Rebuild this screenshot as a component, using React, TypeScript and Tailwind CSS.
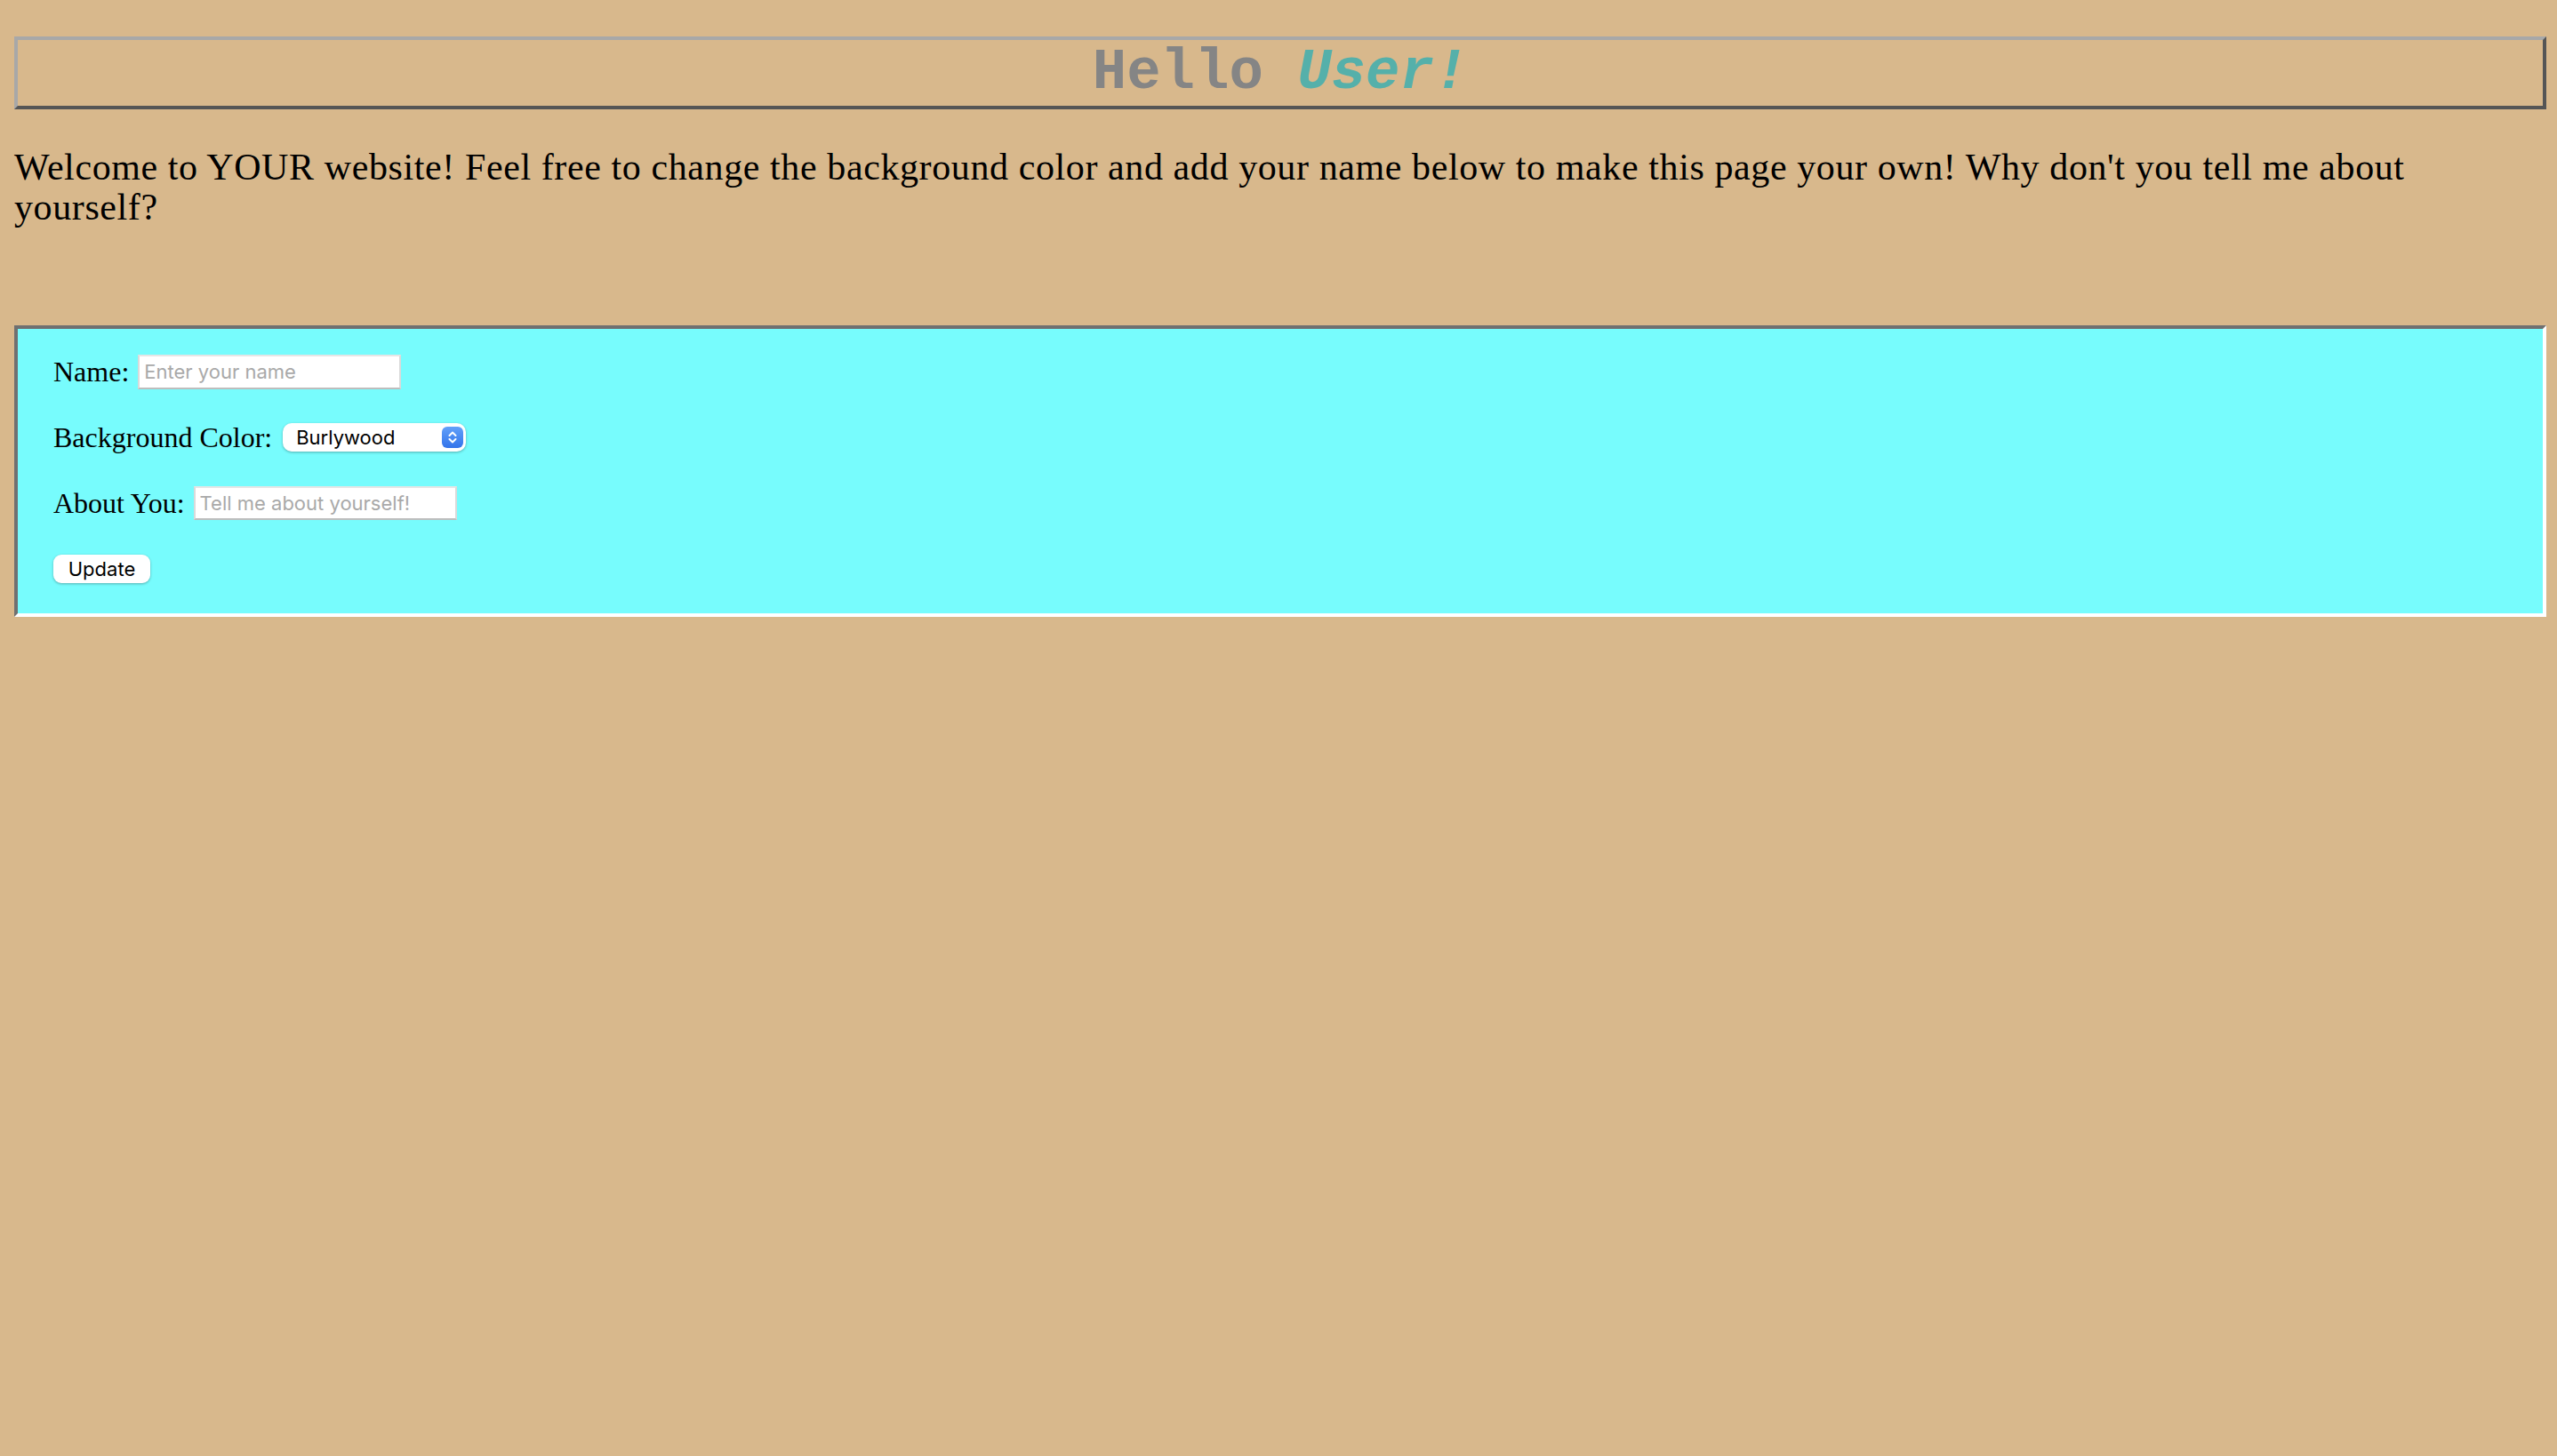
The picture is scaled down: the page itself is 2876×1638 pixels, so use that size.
import React, { useState } from 'react';

// swatches shown in the picker; burlywood is tuned to how it shows on screen
const BG_COLORS: Record<string, string> = {
  Burlywood: '#d8b88c',
  Lavender: '#e6e6fa',
  Khaki: '#f0e68c',
  Salmon: '#fa8072',
  'Light Gray': '#d3d3d3',
};

const Stepper: React.FC = () => (
  <div className="pointer-events-none absolute right-[3px] top-[4px] flex h-[24px] w-[24px] items-center justify-center rounded-[6px] bg-linear-to-b from-[#62a0f9] to-[#3373ea]">
    <svg width="12" height="18" viewBox="0 0 12 18" fill="none">
      <path d="M2.5 7L6 3.5L9.5 7" stroke="white" strokeWidth="2" strokeLinecap="round" strokeLinejoin="round" />
      <path d="M2.5 11L6 14.5L9.5 11" stroke="white" strokeWidth="2" strokeLinecap="round" strokeLinejoin="round" />
    </svg>
  </div>
);

export default function App() {
  const [name, setName] = useState('');
  const [about, setAbout] = useState('');
  const [color, setColor] = useState('Burlywood');
  const [applied, setApplied] = useState({ name: '', color: 'Burlywood' });

  const handleUpdate = () => {
    setApplied({ name: name.trim(), color });
  };

  return (
    <div
      className="min-h-screen w-full pl-4 pr-3 pt-[41px] font-['Liberation_Serif',serif] text-black"
      style={{ backgroundColor: BG_COLORS[applied.color] }}
    >
      {/* Greeting */}
      <h1 className="h-[82px] border-4 border-t-[#a8a8a8] border-l-[#a8a8a8] border-r-[#555555] border-b-[#555555] text-center font-['Liberation_Mono','Courier_New',monospace] text-[64px] font-bold leading-[74px]">
        <span className="text-[#858585]">Hello </span>
        <span className="italic text-[#55b0aa]">{applied.name || 'User'}!</span>
      </h1>

      <p className="mt-[43px] text-[42px] leading-[45px] tracking-[0.6px]">
        Welcome to YOUR website! Feel free to change the background color and add your name below to make this page your own! Why don't you tell me about
        <br />
        yourself?
      </p>

      {/* Settings form */}
      <form
        onSubmit={(e) => e.preventDefault()}
        className="mt-[110px] flex flex-col gap-[34px] border-4 border-t-[#707070] border-l-[#707070] border-r-white border-b-white bg-[#77fcfd] pb-[30px] pl-10 pt-[28px] font-['Inter','Liberation_Sans',sans-serif] text-[22px]"
      >
        <div className="flex h-10 items-center gap-[10px]">
          <label htmlFor="name" className="font-['Liberation_Serif',serif] text-[32px] leading-[37px]">
            Name:
          </label>
          <input
            id="name"
            value={name}
            onChange={(e) => setName(e.target.value)}
            placeholder="Enter your name"
            className="h-[39px] w-[296px] border-2 border-t-[#e6e6e6] border-l-[#dadada] border-r-[#dadada] border-b-[#bdbdbd] bg-white px-[5px] text-black outline-none placeholder:text-[#a9a9a9]"
          />
        </div>

        <div className="flex h-10 items-center gap-[10px]">
          <label htmlFor="bg" className="font-['Liberation_Serif',serif] text-[32px] leading-[37px]">
            Background Color:
          </label>
          <div className="relative ml-[2px] h-[32px] w-[206px] rounded-[10px] bg-white shadow-[0_1px_3px_rgba(0,0,0,0.3)]">
            <select
              id="bg"
              value={color}
              onChange={(e) => setColor(e.target.value)}
              className="h-full w-full appearance-none rounded-[10px] bg-transparent pl-[15px] text-black outline-none"
            >
              {Object.keys(BG_COLORS).map((c) => (
                <option key={c} value={c}>
                  {c}
                </option>
              ))}
            </select>
            <Stepper />
          </div>
        </div>

        <div className="flex h-10 items-center gap-[10px]">
          <label htmlFor="about" className="font-['Liberation_Serif',serif] text-[32px] leading-[37px]">
            About You:
          </label>
          <input
            id="about"
            value={about}
            onChange={(e) => setAbout(e.target.value)}
            placeholder="Tell me about yourself!"
            className="h-[38px] w-[296px] border-2 border-t-[#e6e6e6] border-l-[#dadada] border-r-[#dadada] border-b-[#bdbdbd] bg-white px-[5px] text-black outline-none placeholder:text-[#a9a9a9]"
          />
        </div>

        <div className="flex h-10 items-center">
          <button
            type="button"
            onClick={handleUpdate}
            className="h-[32px] w-[109px] rounded-[9px] bg-white text-black shadow-[0_1px_3px_rgba(0,0,0,0.3)]"
          >
            Update
          </button>
        </div>
      </form>
    </div>
  );
}
